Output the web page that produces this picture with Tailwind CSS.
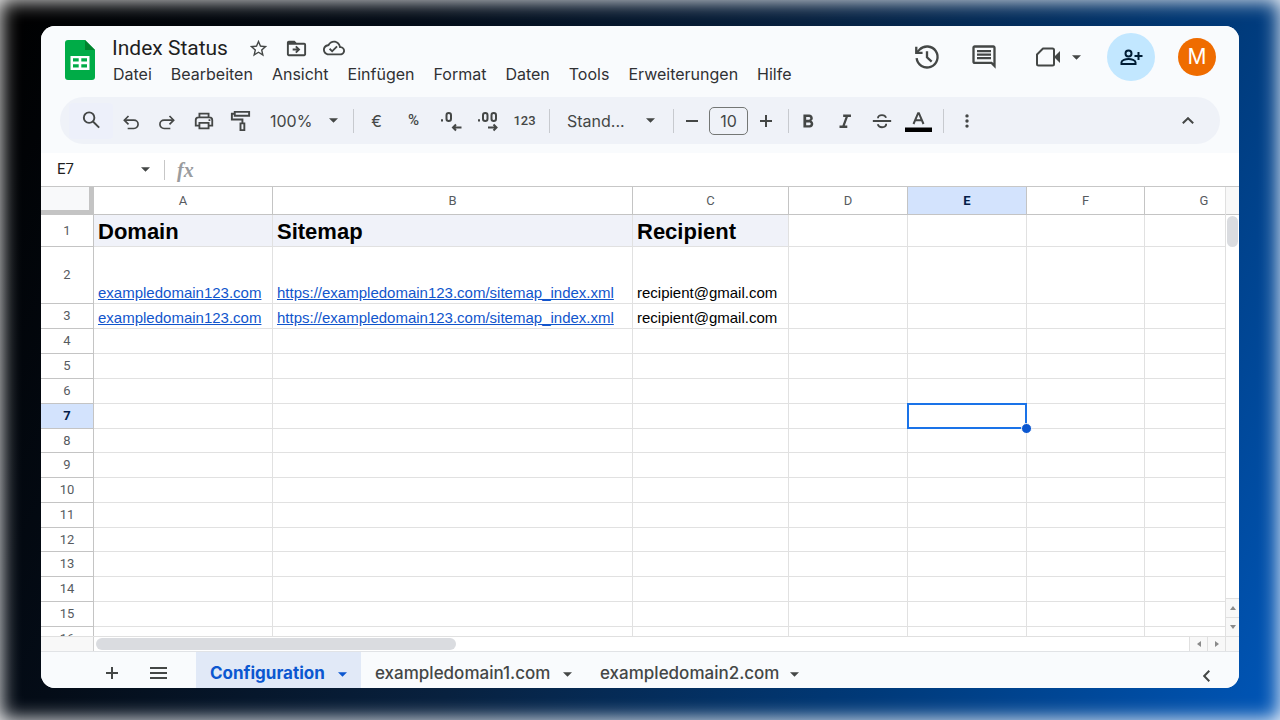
<!DOCTYPE html>
<html lang="de">
<head>
<meta charset="utf-8">
<meta name="viewport" content="width=device-width, initial-scale=1">
<title>Index Status</title>
<script src="https://cdn.jsdelivr.net/npm/@tailwindcss/browser@4"></script>
</head>
<body class="bg-white">
<div class="flex h-screen flex-col overflow-hidden bg-[linear-gradient(118deg,#000000_0%,#040c17_25%,#08213f_49%,#003a7a_75%,#0056b8_100%)] px-[41px] pt-[26px] pb-8 font-['Inter',sans-serif] text-[#444746] shadow-[inset_0_0_20px_#ffffff]">
<main class="flex min-h-0 flex-1 flex-col overflow-hidden rounded-[14px] bg-white">

  <!-- Header -->
  <header class="bg-[#f9fbfd] pb-[9px]">
    <div class="flex h-[71px] items-start pr-[23px] pl-6">
      <svg class="mt-[14px] h-10 w-[30px] shrink-0" viewBox="0 0 30 40" role="img" aria-label="Tabellen">
        <path fill="#00ac47" d="M3 0h17l10 10v27a3 3 0 0 1-3 3H3a3 3 0 0 1-3-3V3a3 3 0 0 1 3-3z"/>
        <path fill="#00832d" d="M20 0l10 10H20z"/>
        <path fill="#fff" fill-rule="evenodd" d="M5.500 16h19v14h-19zM8 18.300v3.300h5.700v-3.300zM16.300 18.300v3.300H22v-3.300zM8 24.200v3.300h5.700v-3.300zM16.300 24.200v3.300H22v-3.300z"/>
      </svg>
      <div class="mt-2 ml-[17px]">
        <div class="flex h-7 items-center">
          <h1 class="font-['Roboto',sans-serif] text-[21px] leading-7 text-[#1f1f1f]">Index Status</h1>
          <button class="ml-5" aria-label="Markieren"><svg class="h-[21px] w-[21px]" viewBox="0 0 24 24" fill="currentColor"><path d="M22 9.240l-7.190-.62L12 2 9.190 8.630 2 9.240l5.460 4.730L5.820 21 12 17.270 18.180 21l-1.630-7.030L22 9.240zM12 15.400l-3.760 2.270 1-4.280-3.320-2.880 4.380-.38L12 6.100l1.710 4.040 4.380.38-3.320 2.880 1 4.280L12 15.400z"/></svg></button>
          <button class="ml-4" aria-label="Verschieben"><svg class="h-[23px] w-[23px]" viewBox="0 0 24 24" fill="currentColor"><path d="M20 6h-8l-2-2H4c-1.100 0-2 .9-2 2v12c0 1.100.9 2 2 2h16c1.100 0 2-.9 2-2V8c0-1.100-.9-2-2-2zm0 12H4V8h16v10zm-8-1l4-4-4-4-1.400 1.400 1.600 1.600H8v2h4.200l-1.600 1.600L12 17z"/></svg></button>
          <button class="ml-[15px]" aria-label="Gespeichert"><svg class="h-[22px] w-[22px]" viewBox="0 0 24 24" fill="currentColor"><path d="M19.350 10.040C18.670 6.590 15.640 4 12 4 9.110 4 6.600 5.640 5.350 8.040 2.340 8.360 0 10.910 0 14c0 3.310 2.690 6 6 6h13c2.760 0 5-2.240 5-5 0-2.640-2.050-4.780-4.650-4.960zM19 18H6c-2.210 0-4-1.790-4-4 0-2.050 1.530-3.760 3.560-3.970l1.070-.11.5-.95C8.080 7.140 9.940 6 12 6c2.620 0 4.880 1.860 5.390 4.430l.3 1.500 1.530.11c1.560.1 2.780 1.410 2.780 2.960 0 1.650-1.350 3-3 3zm-9-3.820l-2.090-2.090L6.500 13.500 10 17l6.010-6.010-1.410-1.410z"/></svg></button>
        </div>
        <nav class="ml-px flex gap-[19px] text-base leading-6 text-[#303134]" aria-label="Menü">
          <button>Datei</button><button>Bearbeiten</button><button>Ansicht</button><button>Einfügen</button><button>Format</button><button>Daten</button><button>Tools</button><button>Erweiterungen</button><button>Hilfe</button>
        </nav>
      </div>
      <div class="mt-[7px] ml-auto flex h-12 items-center">
        <button aria-label="Verlauf"><svg class="h-7 w-7" viewBox="0 0 24 24" fill="none" stroke="currentColor" stroke-width="2"><path d="M3.100 13a9 9 0 1 0 2.400-7.200L2.900 8.400"/><path d="M2.800 3.200v5.300h5.400M12 7v5.300l4 3.700"/></svg></button>
        <button class="ml-[29px]" aria-label="Kommentare"><svg class="h-7 w-7" viewBox="0 0 24 24" fill="currentColor"><path d="M21.990 4c0-1.100-.89-2-1.990-2H4c-1.100 0-2 .9-2 2v12c0 1.100.9 2 2 2h14l4 4-.01-18zM20 4v13.200L18.800 16H4V4h16zM6 12h12v2H6zm0-3h12v2H6zm0-3h12v2H6z"/></svg></button>
        <button class="ml-[38px] flex items-center gap-[12px]" aria-label="Videoanruf"><svg class="h-5 w-6" viewBox="0 0 24 20"><path fill="none" stroke="currentColor" stroke-width="2" stroke-linejoin="round" d="M7 1.500h9.500a1.500 1.500 0 0 1 1.500 1.500v14a1.500 1.500 0 0 1-1.500 1.500h-14A1.500 1.500 0 0 1 1 17V7.500z"/><path fill="currentColor" d="M18 10l6-6v12z"/></svg><svg class="h-[5px] w-[9px]" viewBox="0 0 10 5" fill="currentColor"><path d="M0 0h10L5 5z"/></svg></button>
        <button class="ml-[26px] flex h-12 w-12 items-center justify-center rounded-full bg-[#c2e7ff] text-[#001d35]" aria-label="Freigeben"><svg class="h-6 w-6" viewBox="0 0 24 24" fill="none" stroke="currentColor" stroke-width="2"><circle cx="9.500" cy="8.500" r="3"/><path d="M2.500 19v-1.700c0-2 4-3.300 7-3.300s7 1.300 7 3.300V19z"/><path d="M19.500 7v8M15.500 11h8"/></svg></button>
        <button class="ml-[23px] h-[38px] w-[38px] rounded-full bg-[#ef6c00] text-[21px] leading-[38px] text-white">M</button>
      </div>
    </div>

    <!-- Toolbar -->
    <div class="mx-[19px] flex h-[47px] items-center rounded-full bg-[#eff2f8] pl-[9px]" role="toolbar">
      <button class="flex h-9 w-11 items-center justify-center rounded bg-[#edf0fa]" aria-label="Suchen"><svg class="h-[23px] w-[23px]" viewBox="0 0 24 24" fill="none" stroke="currentColor" stroke-width="2"><circle cx="9.500" cy="9" r="5.500"/><path d="M13.500 13l6.500 6.500"/></svg></button>
      <button class="flex w-9 justify-center" aria-label="Rückgängig"><svg class="h-5 w-5" viewBox="0 0 24 24" fill="none" stroke="currentColor" stroke-width="2"><path d="M8 21h7.500a4.800 4.800 0 0 0 0-10H5"/><path d="M9 6l-5 5 5 5"/></svg></button>
      <button class="flex w-9 justify-center" aria-label="Wiederholen"><svg class="h-5 w-5" viewBox="0 0 24 24" fill="none" stroke="currentColor" stroke-width="2"><path d="M16 21H8.500a4.800 4.800 0 0 1 0-10H19"/><path d="M15 6l5 5-5 5"/></svg></button>
      <button class="flex w-[37px] justify-center" aria-label="Drucken"><svg class="h-[22px] w-[22px]" viewBox="0 0 24 24" fill="none" stroke="currentColor" stroke-width="2"><path d="M7 8V4h10v4M7 17H3v-6a3 3 0 0 1 3-3h12a3 3 0 0 1 3 3v6h-4"/><path d="M7 14h10v6H7z"/><path d="M17 11h2"/></svg></button>
      <button class="flex w-9 justify-center" aria-label="Format übertragen"><svg class="h-[23px] w-[23px]" viewBox="0 0 24 24" fill="none" stroke="currentColor" stroke-width="2"><path d="M6 3h15v4H6zM6 5H3v6h11v4"/><path d="M12 15h4v7h-4z"/></svg></button>
      <label class="flex w-[95px] items-center pl-3"><select class="w-[59px] appearance-none bg-transparent text-base" aria-label="Zoom"><option>100%</option></select><svg class="h-[5px] w-[9px]" viewBox="0 0 10 5" fill="currentColor"><path d="M0 0h10L5 5z"/></svg></label>
      <div class="h-6 w-px bg-[#c7cacf]"></div>
      <button class="ml-1 w-[37px] text-base">€</button>
      <button class="w-[37px] font-['Roboto',sans-serif] text-[15px] font-medium">%</button>
      <button class="flex w-[37px] justify-center" aria-label="Dezimalstelle entfernen"><svg class="h-6 w-6" viewBox="0 0 24 24" fill="none" stroke="currentColor" stroke-width="2"><path d="M3 12.500v-2.200"/><rect x="7.500" y="4" width="4.500" height="8" rx="2.200"/><path d="M22.500 18.500H14M17 15.500l-3 3 3 3"/></svg></button>
      <button class="flex w-[37px] justify-center" aria-label="Dezimalstelle hinzufügen"><svg class="h-6 w-6" viewBox="0 0 24 24" fill="none" stroke="currentColor" stroke-width="2"><path d="M3 12.500v-2.200"/><rect x="7" y="4" width="4.500" height="8" rx="2.200"/><rect x="15.500" y="4" width="4.500" height="8" rx="2.200"/><path d="M12 18.500h8.500M17.500 15.500l3 3-3 3"/></svg></button>
      <button class="w-[37px] font-['Roboto',sans-serif] text-[13px] font-medium">123</button>
      <div class="ml-[6px] h-6 w-px bg-[#c7cacf]"></div>
      <label class="flex w-[123px] items-center pl-[17px]"><select class="w-[79px] appearance-none bg-transparent text-base" aria-label="Schriftart"><option>Stand...</option></select><svg class="h-[5px] w-[9px]" viewBox="0 0 10 5" fill="currentColor"><path d="M0 0h10L5 5z"/></svg></label>
      <div class="h-6 w-px bg-[#c7cacf]"></div>
      <button class="flex w-[35px] justify-center" aria-label="Schrift verkleinern"><svg class="h-3 w-3" viewBox="0 0 12 12" stroke="currentColor" stroke-width="2"><path d="M0 6h12"/></svg></button>
      <input class="h-7 w-[39px] rounded-[5px] border border-[#747775] text-center text-base" aria-label="Schriftgröße" value="10">
      <button class="flex w-[35px] justify-center" aria-label="Schrift vergrößern"><svg class="h-3 w-3" viewBox="0 0 12 12" stroke="currentColor" stroke-width="2"><path d="M0 6h12M6 0v12"/></svg></button>
      <div class="ml-[5px] h-6 w-px bg-[#c7cacf]"></div>
      <button class="flex w-[37px] justify-center" aria-label="Fett"><svg class="h-[22px] w-[22px]" viewBox="0 0 24 24" fill="currentColor"><path d="M15.600 11.790c.97-.67 1.650-1.770 1.650-2.790 0-2.260-1.750-4-4-4H7v14h7.040c2.090 0 3.710-1.700 3.710-3.790 0-1.520-.86-2.820-2.150-3.420zM10 7.500h3c.83 0 1.500.67 1.500 1.500s-.67 1.500-1.500 1.500h-3v-3zm3.500 9H10v-3h3.500c.83 0 1.500.67 1.500 1.500s-.67 1.500-1.500 1.500z"/></svg></button>
      <button class="flex w-[37px] justify-center" aria-label="Kursiv"><svg class="h-[22px] w-[22px]" viewBox="0 0 24 24" fill="currentColor"><path d="M10 5v2.500h2.600L9.200 17H6v2.500h8.500V17h-2.700l3.400-9.500H18.500V5z"/></svg></button>
      <button class="flex w-[37px] justify-center" aria-label="Durchgestrichen"><svg class="h-[22px] w-[22px]" viewBox="0 0 24 24" fill="none" stroke="currentColor" stroke-width="2"><path d="M2 12h20M16.500 8.500C15.800 6.500 14.300 5.500 12 5.500c-2.800 0-4.400 1.300-4.400 3.500M7.300 15.500c.7 2.200 2.300 3.300 4.700 3.300 2.900 0 4.600-1.300 4.600-3.800"/></svg></button>
      <button class="flex w-[37px] justify-center" aria-label="Textfarbe"><svg class="h-6 w-[27px]" viewBox="0 0 27 24"><path fill="none" stroke="currentColor" stroke-width="2" d="M8.500 15l4.600-10.800h.8L18.500 15M10.200 11.300h6.600"/><path fill="#000" d="M0 18.500h27V23H0z"/></svg></button>
      <div class="ml-[6px] h-6 w-px bg-[#c7cacf]"></div>
      <button class="ml-[5px] flex w-9 justify-center" aria-label="Mehr"><svg class="h-4 w-4" viewBox="0 0 16 16" fill="currentColor"><circle cx="8" cy="2.900" r="1.700"/><circle cx="8" cy="8" r="1.700"/><circle cx="8" cy="13.100" r="1.700"/></svg></button>
      <button class="mr-[14px] ml-auto flex w-9 justify-center" aria-label="Menüs ausblenden"><svg class="h-[7px] w-3" viewBox="0 0 12 7" fill="none" stroke="currentColor" stroke-width="2"><path d="M.8 6.300L6 1.200l5.200 5.100"/></svg></button>
    </div>
  </header>

  <!-- Formula bar -->
  <div class="flex h-[34px] shrink-0 items-center border-b border-[#c7c7c7]">
    <input class="w-[100px] bg-transparent pl-4 font-['Roboto',sans-serif] text-[15px] text-[#1f1f1f]" aria-label="Namensfeld" value="E7">
    <svg class="h-[5px] w-[9px]" viewBox="0 0 10 5" fill="currentColor"><path d="M0 0h10L5 5z"/></svg>
    <div class="ml-[14px] h-5 w-px bg-[#c7c7c7]"></div>
    <label for="formula" class="ml-3 font-['Liberation_Serif',serif] text-[20px] leading-6 font-bold text-[#9a9c9e] italic">fx</label>
    <input id="formula" class="ml-3 flex-1 bg-transparent text-[15px] outline-none">
  </div>

  <!-- Grid -->
  <div class="flex min-h-0 flex-1">
    <div class="min-w-0 flex-1 overflow-hidden">
      <table class="w-[1223px] table-fixed border-separate border-spacing-0 font-['Liberation_Sans',sans-serif] text-[15px] leading-[18px] text-black">
        <colgroup><col class="w-[53px]"><col class="w-[179px]"><col class="w-[360px]"><col class="w-[156px]"><col class="w-[119px]"><col class="w-[119px]"><col class="w-[118px]"><col class="w-[119px]"></colgroup>
        <thead>
          <tr class="h-7 font-['Roboto',sans-serif] text-[13px] text-[#575b5f]">
            <td class="border-r-[5px] border-b-[5px] border-[#c4c4c4] bg-[#f8f9fa] p-0"></td>
            <th scope="col" class="border-r border-b border-[#c4c4c4] p-0 font-normal">A</th>
            <th scope="col" class="border-r border-b border-[#c4c4c4] p-0 font-normal">B</th>
            <th scope="col" class="border-r border-b border-[#c4c4c4] p-0 font-normal">C</th>
            <th scope="col" class="border-r border-b border-[#c4c4c4] p-0 font-normal">D</th>
            <th scope="col" class="border-r border-b border-[#c4c4c4] bg-[#d3e3fd] p-0 font-bold text-[#041e49]">E</th>
            <th scope="col" class="border-r border-b border-[#c4c4c4] p-0 font-normal">F</th>
            <th scope="col" class="border-r border-b border-[#c4c4c4] p-0 font-normal">G</th>
          </tr>
        </thead>
        <tbody id="rows"></tbody>
      </table>
    </div>
    <div class="flex w-[14px] shrink-0 flex-col border-l border-[#e0e0e0]">
      <div class="h-7 border-b border-[#c4c4c4] bg-[#f8f8f8]"></div>
      <div class="mx-px mt-px h-[31px] rounded-full bg-[#dadce0]"></div>
      <button class="mt-auto flex h-[19px] items-center justify-center border-t border-[#e0e0e0] bg-[#f8f8f8]" aria-label="Nach oben"><svg class="h-[4px] w-[6px]" viewBox="0 0 6 4" fill="#8a8a8a"><path d="M0 4h6L3 0z"/></svg></button>
      <button class="flex h-[19px] items-center justify-center border-t border-[#e0e0e0] bg-[#f8f8f8]" aria-label="Nach unten"><svg class="h-[4px] w-[6px]" viewBox="0 0 6 4" fill="#8a8a8a"><path d="M0 0h6L3 4z"/></svg></button>
    </div>
  </div>

  <!-- Horizontal scrollbar -->
  <div class="flex h-[15px] shrink-0 border-t border-[#e0e0e0]">
    <div class="w-[53px] border-r border-[#d0d0d0] bg-[#f8f8f8]"></div>
    <div class="mt-px ml-[2px] h-[12px] w-[360px] rounded-full bg-[#dadce0]"></div>
    <button class="ml-auto flex w-[18px] items-center justify-center border-l border-[#e0e0e0] bg-[#f8f8f8]" aria-label="Nach links"><svg class="h-[6px] w-[4px]" viewBox="0 0 4 6" fill="#8a8a8a"><path d="M4 0v6L0 3z"/></svg></button>
    <button class="flex w-[18px] items-center justify-center border-l border-[#e0e0e0] bg-[#f8f8f8]" aria-label="Nach rechts"><svg class="h-[6px] w-[4px]" viewBox="0 0 4 6" fill="#8a8a8a"><path d="M0 0v6l4-3z"/></svg></button>
    <div class="w-[14px] border-l border-[#e0e0e0] bg-[#f8f8f8]"></div>
  </div>

  <!-- Sheet tabs -->
  <footer class="flex h-[37px] shrink-0 border-t border-[#e1e3e6] bg-[#f9fbfd] pl-12 text-[17px] font-medium">
    <button class="flex w-[46px] items-center justify-center pt-[6px]" aria-label="Tabelle hinzufügen"><svg class="h-3 w-3" viewBox="0 0 12 12" stroke="currentColor" stroke-width="2"><path d="M0 6h12M6 0v12"/></svg></button>
    <button class="flex w-[46px] items-center justify-center pt-[6px]" aria-label="Alle Tabellen"><svg class="h-3 w-[17px]" viewBox="0 0 17 12" stroke="currentColor" stroke-width="2"><path d="M0 1h17M0 6h17M0 11h17"/></svg></button>
    <button class="ml-[15px] flex w-[165px] items-center justify-between bg-[#e1e9f7] px-[14px] pt-2 font-bold text-[#0b57d0]">Configuration<svg class="h-[5px] w-[9px]" viewBox="0 0 10 5" fill="currentColor"><path d="M0 0h10L5 5z"/></svg></button>
    <button class="flex w-[225px] items-center justify-between px-[14px] pt-2">exampledomain1.com<svg class="h-[5px] w-[9px]" viewBox="0 0 10 5" fill="currentColor"><path d="M0 0h10L5 5z"/></svg></button>
    <button class="flex w-[227px] items-center justify-between px-[14px] pt-2">exampledomain2.com<svg class="h-[5px] w-[9px]" viewBox="0 0 10 5" fill="currentColor"><path d="M0 0h10L5 5z"/></svg></button>
    <button class="mr-[27px] ml-auto flex w-3 items-center justify-center pt-3" aria-label="Seitenleiste einblenden"><svg class="h-3 w-[7px]" viewBox="0 0 7 12" fill="none" stroke="currentColor" stroke-width="2"><path d="M6.300.8L1.200 6l5.100 5.200"/></svg></button>
  </footer>
</main>
</div>

<script>
// Sheet contents; rows without an entry stay empty.
const link = (href, text) => `<a class="text-[#1155cc] underline" href="${href}">${text}</a>`;
const domain = link("https://exampledomain123.com", "exampledomain123.com");
const sitemap = link("https://exampledomain123.com/sitemap_index.xml", "https://exampledomain123.com/sitemap_index.xml");
const data = {
  1: ["Domain", "Sitemap", "Recipient"],
  2: [domain, sitemap, "recipient@gmail.com"],
  3: [domain, sitemap, "recipient@gmail.com"],
};
const heights = { 1: "h-8", 2: "h-[57px]", 8: "h-6", 12: "h-6" };
let html = "";
for (let r = 1; r <= 16; r++) {
  const active = r === 7 ? "bg-[#d3e3fd] font-bold text-[#041e49]" : "font-normal text-[#575b5f]";
  html += `<tr class="${heights[r] || "h-[25px]"}"><th scope="row" class="border-r border-b border-[#c4c4c4] p-0 font-['Roboto',sans-serif] text-[13px] ${active}">${r}</th>`;
  for (let c = 0; c < 7; c++) {
    const text = (data[r] && data[r][c]) || "";
    const head = r === 1 && c < 3 ? "bg-[#f0f2f9] text-[22px] leading-[26px] font-bold" : "";
    const selected = r === 7 && c === 4
      ? `<div class="absolute -inset-px border-2 border-[#1a73e8]"></div><div class="absolute -right-[6px] -bottom-[6px] z-10 h-[11px] w-[11px] rounded-full border border-white bg-[#0b57d0]"></div>` : "";
    html += `<td class="relative border-r border-b border-[#e1e1e1] px-1 pt-0 pb-px align-bottom whitespace-nowrap ${head}">${text}${selected}</td>`;
  }
  html += "</tr>";
}
document.getElementById("rows").innerHTML = html;
</script>
</body>
</html>
